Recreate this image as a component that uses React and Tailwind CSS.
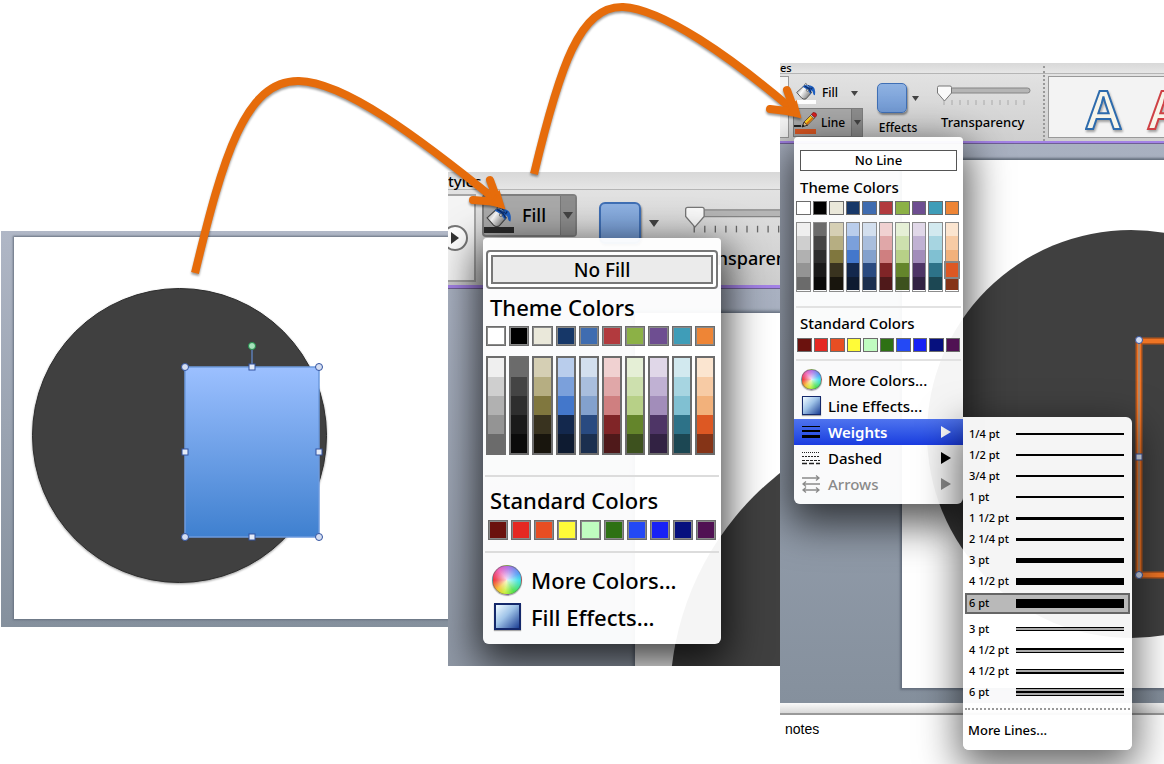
const THEME = ["#ffffff", "#000000", "#eae8da", "#163768", "#3f6cb0", "#b23a3e", "#8cb146", "#6e4e91", "#3f9db8", "#ee8536"];

const SHADES = [
    ["#efefef", "#cfcfcf", "#b1b1b1", "#949494", "#6b6b6b"],
    ["#6b6b6b", "#444444", "#2e2e2e", "#1a1a1a", "#0a0a0a"],
    ["#d5cfb4", "#b6ae82", "#80773e", "#39331f", "#18150d"],
    ["#b9cdec", "#7ba0db", "#4377cb", "#13284d", "#0e1b31"],
    ["#d3dfee", "#a9bedd", "#83a1cd", "#294a80", "#1b2f4f"],
    ["#f0d1d1", "#e0a7a8", "#cf7f80", "#802527", "#4f191a"],
    ["#e5efd6", "#cde0ae", "#b7d087", "#64852b", "#3d511e"],
    ["#e0d7e8", "#c0b1d3", "#a28dba", "#4e3566", "#322243"],
    ["#d2e9ef", "#a7d5e1", "#80c0d2", "#2d7288", "#1c4753"],
    ["#fbe5d0", "#f7cba5", "#f2b17b", "#dd5823", "#853417"]
];

const STANDARD = ["#6b120e", "#e52822", "#e84e23", "#fffb38", "#c0fcc0", "#2e7114", "#2449f5", "#1722f5", "#06107e", "#501153"];

const WEIGHTS = [
    { label: "1/4 pt", bars: "h-[2px]" },
    { label: "1/2 pt", bars: "h-[2px]" },
    { label: "3/4 pt", bars: "h-[2px]" },
    { label: "1 pt", bars: "h-[2px]" },
    { label: "1 1/2 pt", bars: "h-[3px]" },
    { label: "2 1/4 pt", bars: "h-[3px]" },
    { label: "3 pt", bars: "h-[5px]" },
    { label: "4 1/2 pt", bars: "h-[7px]" }
];

const COMPOUND = [
    { label: "3 pt", gap: "gap-[2px]", bars: ["h-px", "h-px"] },
    { label: "4 1/2 pt", gap: "gap-[2px]", bars: ["h-[2px]", "h-px"] },
    { label: "4 1/2 pt", gap: "gap-[2px]", bars: ["h-px", "h-[2px]"] },
    { label: "6 pt", gap: "gap-[2px]", bars: ["h-px", "h-[2px]", "h-px"] }
];

function Bucket({ className }) {
    return (
        <svg viewBox="0 0 28 24" className={className} aria-hidden="true">
            <defs>
                <linearGradient id="metal" x1="0" y1="0" x2="1" y2="0.6">
                    <stop offset="0" stopColor="#8a8a8a" />
                    <stop offset="0.45" stopColor="#fafafa" />
                    <stop offset="1" stopColor="#777" />
                </linearGradient>
            </defs>
            <path d="M12 6V3q1.500-3 3.500 0v6" fill="none" stroke="#555" strokeWidth="1.200" />
            <path d="M1 14 11 5l11 9-8 9q-3 1.500-6-1Z" fill="url(#metal)" stroke="#444" strokeWidth="1.200" />
            <path d="M9 6q3-3 8-2 7 0 9 5 1.500 4 .5 9-2.500 0-3-5l-2-2-1 6q-3-7-11.500-11Z" fill="#1f5fc0" />
            <path d="M12 5q7 3 9 9M17 4l3 5M23 7l-2 3" fill="none" stroke="#0c2b66" strokeWidth="1.500" />
            <path d="M15 4.500q3 .5 4 2.500" fill="none" stroke="#9cc4f5" strokeWidth="1" />
            <circle cx="16" cy="11" r="1.500" fill="#ddd" stroke="#333" strokeWidth="0.700" />
        </svg>
    );
}

function Pencil() {
    return (
        <svg viewBox="0 0 23 16" className="h-4 w-[23px]" aria-hidden="true">
            <path d="M0 14h7" stroke="#222" strokeWidth="2" />
            <path d="m8 15 2-5 4 3Z" fill="#e8c690" stroke="#111" strokeWidth="0.800" />
            <path d="m8 15 1-2.500L10.500 14Z" fill="#111" />
            <path d="m10 10 7-7 3.500 3-7 7Z" fill="#ffd21e" stroke="#533" strokeWidth="0.800" />
            <path d="m12.500 12 7-7" stroke="#e06a10" strokeWidth="1.300" />
            <path d="m16.500 3.500 1-1 3.500 3-1 1Z" fill="#ddd" stroke="#333" strokeWidth="0.600" />
            <path d="m17.500 2.500 1.500-2q3.500-.5 3.800 3L21 5.500Z" fill="#d91f1f" stroke="#7a1010" strokeWidth="0.600" />
        </svg>
    );
}

function Caret({ className }) {
    return (
        <svg viewBox="0 0 10 7" className={className} aria-hidden="true">
            <path d="M0 0h10L5 7Z" fill="#444" />
        </svg>
    );
}

function SubmenuArrow() {
    return (
        <svg viewBox="0 0 10 12" className="ml-auto h-3 w-[10px]" fill="currentColor" aria-hidden="true">
            <path d="M0 0v12l10-6Z" />
        </svg>
    );
}

function ColorWheel({ className }) {
    return (
        <span
            className={`${className} rounded-full border border-[#666]/60 bg-[radial-gradient(circle,#ffffffcc_0%,#ffffff22_55%,transparent_70%),conic-gradient(#b56be0,#4f9cf5_60deg,#35e0e8_90deg,#4be04a_150deg,#c8f03a_190deg,#f5c02e_225deg,#f0303a_270deg,#ee5fb5_320deg,#b56be0)] shadow-[0_1px_1px_#0005]`}
        />
    );
}

function EffectsSwatch({ className }) {
    return (
        <span
            className={`${className} border-[#14286b] bg-[linear-gradient(135deg,#eaf7ff_5%,#9fc3e8_45%,#1c3f94_100%)] shadow-[0_1px_1px_#0005]`}
        />
    );
}

// Swatches share one grid; "large" is the zoomed menu.
function Swatches({ colors, large }) {
    return (
        <div className={large ? "grid grid-cols-10 gap-[3px]" : "grid grid-cols-10 gap-[2px]"}>
            {colors.map((color) => (
                <button
                    key={color}
                    type="button"
                    aria-label={color}
                    className={
                        large
                            ? "h-5 border-2 border-[#6c6c6c] outline-1 -outline-offset-2 outline-white/20"
                            : "h-[14px] border border-[#6c6c6c]"
                    }
                    style={{ backgroundColor: color }}
                />
            ))}
        </div>
    );
}

function Shades({ large, selected }) {
    return (
        <div className={large ? "grid grid-cols-10 gap-[3px]" : "grid grid-cols-10 gap-[2px]"}>
            {SHADES.map((column, index) => (
                <div
                    key={index}
                    className={
                        large
                            ? "flex h-[99px] flex-col border-2 border-[#6c6c6c]"
                            : "flex h-[70px] flex-col border border-[#8c8c8c]"
                    }
                >
                    {column.map((color) => (
                        <button
                            key={color}
                            type="button"
                            aria-label={color}
                            className={
                                color === selected
                                    ? "relative flex-1 outline-2 outline-[#858585]"
                                    : "flex-1"
                            }
                            style={{ backgroundColor: color }}
                        />
                    ))}
                </div>
            ))}
        </div>
    );
}

function TransparencySlider({ id, large }) {
    return (
        <div className={large ? "relative h-8 w-[124px] shrink-0" : "relative h-[22px] w-[94px] shrink-0"}>
            <svg viewBox="0 0 94 22" className="h-full w-full" preserveAspectRatio="xMinYMin meet" aria-hidden="true">
                <rect x="3" y="3" width="90" height="5" rx="2.500" fill="#b5b5b5" stroke="#858585" />
                {[...Array(11)].map((_, tick) => (
                    <path key={tick} d={`M${7 + tick * 8} 15v5`} stroke={large ? "#666" : "#aaa"} />
                ))}
                <path d="M2 1h11q1.500 0 1.500 1.500V8l-7 8-7-8V2.500Q.5 1 2 1Z" fill="#fafafa" stroke="#777" />
            </svg>
            <input
                id={id}
                type="range"
                defaultValue="0"
                className="absolute inset-0 h-full w-full cursor-pointer opacity-0"
            />
        </div>
    );
}

function Handle({ x, y, round }) {
    return round ? (
        <circle cx={x} cy={y} r="3.500" fill="#d5def2" stroke="#3253a0" />
    ) : (
        <rect x={x - 3} y={y - 3} width="6" height="6" fill="#e4ebf8" stroke="#3253a0" />
    );
}

function ShapePanel() {
    return (
        <section className="mt-[231px] ml-px h-[396px] min-w-0 overflow-hidden bg-linear-to-b from-[#b0b7c6] to-[#85909d] pt-[6px] pb-2 pl-[13px]">
            <div className="h-full bg-white shadow-[0_0_2px_1px_#66707f]">
                <svg className="h-full w-full" role="img" aria-label="Circle and rectangle">
                    <defs>
                        <linearGradient id="blue" x1="0" y1="0" x2="0" y2="1">
                            <stop offset="0" stopColor="#9cc0ff" />
                            <stop offset="1" stopColor="#3f80cf" />
                        </linearGradient>
                    </defs>
                    <g className="drop-shadow-[0_1px_1px_#0006]">
                        <circle cx="165.500" cy="198.500" r="147" fill="#404040" stroke="#2c2c2c" />
                    </g>
                    <rect x="171" y="130" width="134" height="170" fill="url(#blue)" stroke="#6d9ade" strokeWidth="1.500" />
                    <path d="M238 110v20" stroke="#5b7cb4" strokeWidth="1.500" />
                    <circle cx="238" cy="109" r="3.500" fill="#a5e2bb" stroke="#1f8f4a" />
                    <Handle x={171} y={130} round />
                    <Handle x={305} y={130} round />
                    <Handle x={171} y={300} round />
                    <Handle x={305} y={300} round />
                    <Handle x={238} y={130} />
                    <Handle x={238} y={300} />
                    <Handle x={171} y={215} />
                    <Handle x={305} y={215} />
                </svg>
            </div>
        </section>
    );
}

function FillMenu() {
    return (
        <div className="absolute top-[66px] left-[35px] w-[238px] rounded-b-md rounded-t-sm bg-white/95 pt-3 pb-[9px] text-[22px] leading-7 font-medium shadow-[0_14px_40px_6px_#000b]">
            <div className="px-[3px]">
                <button
                    type="button"
                    className="h-[39px] w-full rounded-sm border-2 border-[#777] bg-white p-[3px] text-[19px] leading-6"
                >
                    <span className="flex h-full items-center justify-center border-2 border-[#777] bg-[#ebebeb]">
                        No Fill
                    </span>
                </button>
            </div>
            <h2 className="mt-1 pl-[7px]">Theme Colors</h2>
            <div className="mt-[5px] space-y-[10px] pr-[6px] pl-[3px]">
                <Swatches colors={THEME} large />
                <Shades large />
            </div>
            <hr className="mx-[2px] mt-5 border-t-2 border-[#dcdcdc]" />
            <h2 className="mt-[9px] pl-[7px]">Standard Colors</h2>
            <div className="mt-[6px] px-[5px]">
                <Swatches colors={STANDARD} large />
            </div>
            <hr className="mx-[2px] mt-[11px] border-t-2 border-[#dcdcdc]" />
            <button type="button" className="mt-2 flex h-[37px] w-full items-center gap-[9px] pl-[9px]">
                <ColorWheel className="size-[30px]" />
                More Colors...
            </button>
            <button type="button" className="flex h-[37px] w-full items-center gap-[9px] pl-[9px]">
                <span className="flex w-[30px] justify-center">
                    <EffectsSwatch className="size-[27px] border-2" />
                </span>
                Fill Effects...
            </button>
        </div>
    );
}

function FillPanel() {
    return (
        <section className="relative mt-[172px] h-[494px] min-w-0 overflow-hidden">
            <header className="flex h-[18px] items-center border-b border-[#b5b5b5] bg-linear-to-b from-[#d8d8d8] to-[#e6e6e6] text-[15px] leading-4 font-medium">
                tyles
            </header>
            <div className="flex h-[95px] gap-[6px] bg-linear-to-b from-[#e2e2e2] to-[#cdcdcd] pt-1">
                <div className="h-[88px] w-[28px] shrink-0 overflow-hidden border-2 border-l-0 border-[#a5a5a5] bg-[#f4f4f4] pt-[29px]">
                    <button
                        type="button"
                        aria-label="Next styles"
                        className="-ml-[6px] flex size-[26px] items-center justify-center rounded-full border-2 border-[#777] bg-white"
                    >
                        <svg viewBox="0 0 8 12" className="h-3 w-2" aria-hidden="true">
                            <path d="M0 0v12l8-6Z" fill="#333" />
                        </svg>
                    </button>
                </div>
                <div className="flex h-[43px] w-[95px] shrink-0 rounded-sm border-2 border-[#7e7e7e] bg-[#a9a9a9]">
                    <button type="button" className="flex w-[76px] items-center gap-2 text-[18px] font-medium">
                        <span className="flex flex-col items-center pt-[7px]">
                            <Bucket className="h-[22px] w-[26px]" />
                            <span className="h-[6px] w-[30px] bg-[#2b2b2b]" />
                        </span>
                        Fill
                    </button>
                    <button
                        type="button"
                        aria-label="Fill options"
                        className="flex flex-1 items-center justify-center border-l border-[#777] bg-[#8d8d8d]"
                    >
                        <Caret className="h-[7px] w-[10px]" />
                    </button>
                </div>
                <button type="button" aria-label="Effects" className="mt-[9px] ml-4 flex h-10 shrink-0 items-center gap-2">
                    <span className="size-[42px] rounded-md border-2 border-[#3f6fb5] bg-linear-to-b from-[#8fb2e2] to-[#7199d3] shadow-[1px_2px_2px_#0006]" />
                    <Caret className="h-[7px] w-[10px]" />
                </button>
                <div className="mt-3 ml-5 flex min-w-0 flex-1 flex-col gap-2">
                    <TransparencySlider id="fill-transparency" large />
                    <label htmlFor="fill-transparency" className="pl-[5px] text-[18px] leading-6 font-medium">
                        Transparency
                    </label>
                </div>
            </div>
            <div className="h-1 border-b border-[#6f5f94] bg-[#a382e6]" />
            <div className="h-full bg-linear-to-b from-[#a9b1c1] to-[#88919e] pt-[24px] pl-[187px]">
                <div className="h-full bg-white shadow-[0_0_3px_2px_#66707f]">
                    <svg className="h-full w-full" aria-hidden="true">
                        <circle cx="322" cy="386" r="287" fill="#404040" />
                    </svg>
                </div>
            </div>
            <FillMenu />
        </section>
    );
}

function WeightRow({ label, children }) {
    return (
        <button type="button" className="flex h-[21px] w-full items-center pr-2 pl-[6px] text-left">
            <span className="w-[47px] shrink-0 whitespace-nowrap">{label}</span>
            <span className="flex-1">{children}</span>
        </button>
    );
}

function WeightsMenu() {
    return (
        <div className="absolute -top-[2px] left-full w-[169px] rounded-r-md rounded-bl-md bg-white/95 pt-[7px] pb-2 text-[11px] font-medium text-black shadow-[0_14px_40px_4px_#0009]">
            {WEIGHTS.map(({ label, bars }) => (
                <WeightRow key={label} label={label}>
                    <span className={`block bg-black ${bars}`} />
                </WeightRow>
            ))}
            <button
                type="button"
                className="mx-[2px] mt-px mb-[5px] flex h-[21px] w-[165px] items-center border-2 border-[#666] bg-[#b9b9b9] pr-1 pl-[2px] text-left"
            >
                <span className="w-[47px] shrink-0">6 pt</span>
                <span className="h-[9px] flex-1 bg-black" />
            </button>
            {COMPOUND.map(({ label, gap, bars }, index) => (
                <WeightRow key={index} label={label}>
                    <span className={`flex flex-col bg-[#aaa] ${gap}`}>
                        {bars.map((bar, line) => (
                            <span key={line} className={`bg-black ${bar}`} />
                        ))}
                    </span>
                </WeightRow>
            ))}
            <hr className="mx-[2px] mt-[5px] border-t-2 border-dotted border-[#999]" />
            <button type="button" className="mt-2 flex h-6 w-full items-center pl-[5px] text-[13px]">
                More Lines...
            </button>
        </div>
    );
}

function LineMenu() {
    return (
        <div className="absolute top-[74px] left-[14px] w-[169px] rounded-b-md rounded-t-sm bg-white/95 pt-3 pb-[7px] text-[15px] leading-5 font-medium shadow-[0_14px_40px_6px_#000a]">
            <div className="px-[6px]">
                <button
                    type="button"
                    className="h-[21px] w-full border border-[#555] bg-white text-[13px] leading-4"
                >
                    No Line
                </button>
            </div>
            <h2 className="mt-[6px] pl-[6px]">Theme Colors</h2>
            <div className="mt-1 space-y-[7px] pr-1 pl-[2px]">
                <Swatches colors={THEME} />
                <Shades selected="#dd5823" />
            </div>
            <hr className="mx-[2px] mt-[14px] border-t-2 border-[#e2e2e2]" />
            <h2 className="mt-[5px] pl-[6px]">Standard Colors</h2>
            <div className="mt-[5px] px-[3px]">
                <Swatches colors={STANDARD} />
            </div>
            <hr className="mx-[2px] mt-[7px] border-t-2 border-[#e2e2e2]" />
            <ul className="mt-[6px]">
                <li>
                    <button type="button" className="flex h-[26px] w-full items-center gap-[6px] pl-[7px]">
                        <ColorWheel className="size-[21px]" />
                        More Colors...
                    </button>
                </li>
                <li>
                    <button type="button" className="flex h-[26px] w-full items-center gap-[6px] pl-[7px]">
                        <span className="flex w-[21px] justify-center">
                            <EffectsSwatch className="size-[19px] border" />
                        </span>
                        Line Effects...
                    </button>
                </li>
                <li className="relative">
                    <button
                        type="button"
                        className="flex h-[26px] w-full items-center gap-[6px] bg-linear-to-b from-[#4f73ee] to-[#1b3be0] pr-3 pl-[7px] font-semibold text-white"
                    >
                        <svg viewBox="0 0 21 14" className="h-[14px] w-[21px]" aria-hidden="true">
                            <path d="M1 1.500h18" stroke="#000" strokeWidth="1" />
                            <path d="M1 6h18" stroke="#000" strokeWidth="2" />
                            <path d="M1 11.500h18" stroke="#000" strokeWidth="3" />
                        </svg>
                        Weights
                        <SubmenuArrow />
                    </button>
                    <WeightsMenu />
                </li>
                <li>
                    <button type="button" className="flex h-[26px] w-full items-center gap-[6px] pr-3 pl-[7px]">
                        <svg viewBox="0 0 21 14" className="h-[14px] w-[21px]" aria-hidden="true">
                            <path d="M1 1.500h18" stroke="#222" strokeDasharray="1 1" />
                            <path d="M1 5.500h18" stroke="#222" strokeDasharray="2 1" />
                            <path d="M1 9.500h18" stroke="#222" strokeDasharray="3 1" />
                            <path d="M1 12.500h18" stroke="#222" strokeWidth="1.500" strokeDasharray="5 2" />
                        </svg>
                        Dashed
                        <SubmenuArrow />
                    </button>
                </li>
                <li>
                    <button
                        type="button"
                        disabled
                        className="flex h-[26px] w-full items-center gap-[6px] pr-3 pl-[7px] text-[#8a8a8a]"
                    >
                        <svg
                            viewBox="0 0 21 18"
                            className="h-[18px] w-[21px]"
                            fill="none"
                            stroke="#8a8a8a"
                            strokeWidth="1.300"
                            aria-hidden="true"
                        >
                            <path d="M1 3h17M15 .5l3 2.500-3 2.500M2 9h17M5 6.500 2 9l3 2.500M2 15h16M5 12.500 2 15l3 2.500M15 12.500l3 2.500-3 2.500" />
                        </svg>
                        Arrows
                        <SubmenuArrow />
                    </button>
                </li>
            </ul>
        </div>
    );
}

function LinePanel() {
    return (
        <section className="relative mt-[63px] h-[701px] min-w-0 overflow-hidden">
            <header className="flex h-[11px] items-center border-b border-[#b5b5b5] bg-linear-to-b from-[#d8d8d8] to-[#e6e6e6] text-[11px] leading-[8px] font-medium">
                es
            </header>
            <div className="flex h-[67px] bg-linear-to-b from-[#e2e2e2] to-[#cfcfcf]">
                <div className="mt-[2px] h-[62px] w-[9px] shrink-0 border border-l-0 border-[#999] bg-[#f4f4f4]" />
                <div className="mt-1 ml-1 w-[70px] shrink-0 text-[12px] leading-4 font-medium">
                    <div className="flex h-[30px] items-center">
                        <button type="button" className="flex w-[58px] items-center gap-[6px] pl-[2px]">
                            <span className="flex flex-col items-center">
                                <Bucket className="h-[18px] w-[20px]" />
                                <span className="h-1 w-[21px] bg-white" />
                            </span>
                            Fill
                        </button>
                        <button type="button" aria-label="Fill options">
                            <Caret className="h-[5px] w-[7px]" />
                        </button>
                    </div>
                    <div className="flex h-[29px] border border-[#7e7e7e] bg-[#a9a9a9]">
                        <button type="button" className="flex w-[57px] items-center gap-1">
                            <span className="flex flex-col items-center gap-px">
                                <Pencil />
                                <span className="h-[5px] w-[21px] bg-[#dd5823]" />
                            </span>
                            Line
                        </button>
                        <button
                            type="button"
                            aria-label="Line options"
                            className="flex flex-1 items-center justify-center border-l border-[#777] bg-[#8d8d8d]"
                        >
                            <Caret className="h-[5px] w-[7px]" />
                        </button>
                    </div>
                </div>
                <button type="button" className="mt-[9px] ml-[14px] flex shrink-0 flex-col gap-[7px] text-[12px] leading-4 font-medium">
                    <span className="flex items-center gap-[5px]">
                        <span className="size-[30px] rounded-[5px] border border-[#3f6fb5] bg-linear-to-b from-[#8fb2e2] to-[#7199d3] shadow-[1px_2px_2px_#0006]" />
                        <Caret className="h-[5px] w-[7px]" />
                    </span>
                    <span>Effects</span>
                </button>
                <div className="mt-[11px] ml-[18px] flex w-[94px] shrink-0 flex-col gap-[7px]">
                    <TransparencySlider id="line-transparency" />
                    <label htmlFor="line-transparency" className="pl-1 text-[13px] leading-4 font-medium">
                        Transparency
                    </label>
                </div>
                <div className="-mt-2 ml-3 shrink-0 border-l-2 border-dotted border-[#999]" />
                <div className="mt-[2px] ml-[3px] flex h-[62px] min-w-0 flex-1 items-end gap-[27px] overflow-hidden border border-r-0 border-[#999] bg-[#f3f3f3] pl-[37px] text-[52px] leading-[56px] font-semibold text-[#f7f5ea]">
                    <button type="button" className="drop-shadow-[1px_2px_1px_#0005] [-webkit-text-stroke:2px_#2d6bad]">
                        A
                    </button>
                    <button type="button" className="drop-shadow-[1px_2px_1px_#0005] [-webkit-text-stroke:2px_#cf4145]">
                        A
                    </button>
                </div>
            </div>
            <div className="h-[3px] border-b border-[#6f5f94] bg-[#a382e6]" />
            <div className="h-[559px] bg-linear-to-b from-[#a9b1c1] to-[#85909d] pt-[16px] pb-[15px] pl-[122px]">
                <div className="h-full bg-white shadow-[0_0_2px_2px_#66707f]">
                    <svg className="h-full w-full" role="img" aria-label="Circle with outlined rectangle">
                        <circle cx="229" cy="274" r="204" fill="#404040" />
                        <rect x="237" y="181" width="180" height="234" fill="none" stroke="#b5561c" strokeWidth="7" />
                        <rect x="237" y="181" width="180" height="234" fill="none" stroke="#ee7424" strokeWidth="4" />
                        <path d="M237 181v234" stroke="#b08a70" strokeWidth="2" />
                        <Handle x={237} y={180} round />
                        <Handle x={237} y={297} />
                        <Handle x={237} y={415} round />
                    </svg>
                </div>
            </div>
            <div className="h-3 border-b-2 border-[#999] bg-linear-to-b from-[#fafafa] to-[#d8d8d8]" />
            <p className="pt-1 pl-[5px] font-['Liberation_Sans',Arial,sans-serif] text-[14px] leading-5">notes</p>
            <LineMenu />
        </section>
    );
}

// Callout arrows that run from one step to the next.
function CalloutArrows() {
    return (
        <svg
            viewBox="0 0 1164 764"
            className="pointer-events-none absolute top-0 left-0 z-10 w-full"
            fill="none"
            stroke="#e66c0b"
            strokeWidth="8"
            aria-hidden="true"
        >
            <g className="drop-shadow-[0_2px_1px_#0006]">
                <path d="M195 273C223 157 245 80 299 81C344 82 417 136 497 201" />
                <path d="M490 180 498 202 473 200" strokeLinecap="round" />
                <path d="M504 208 490 204 499 192Z" fill="#e66c0b" strokeWidth="2" />
                <path d="M534 174C560 65 580 6 623 7C662 9 730 56 793 110" />
                <path d="M787 90 795 112 770 109" strokeLinecap="round" />
                <path d="M800 117 787 114 796 102Z" fill="#e66c0b" strokeWidth="2" />
            </g>
        </svg>
    );
}

export default function App() {
    return (
        <main className="relative grid min-h-screen grid-cols-[448fr_332fr_384fr] items-start overflow-hidden bg-white font-['Noto_Sans','Open_Sans',sans-serif] text-black">
            <ShapePanel />
            <FillPanel />
            <LinePanel />
            <CalloutArrows />
        </main>
    );
}
